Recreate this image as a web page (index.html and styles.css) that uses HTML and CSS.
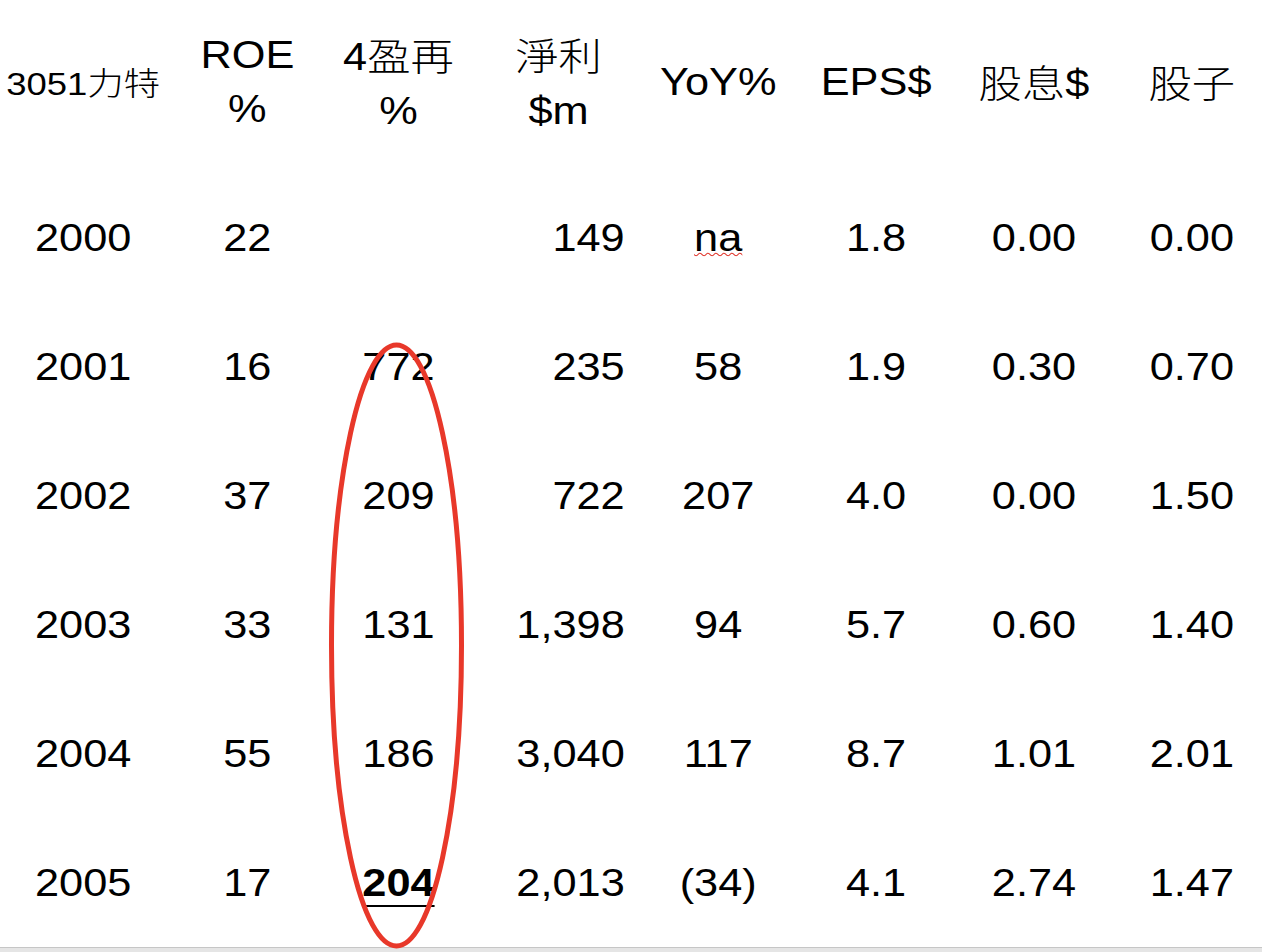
FILE: index.html
```html
<!DOCTYPE html>
<html lang="zh-Hant">
<head>
<meta charset="utf-8">
<title>3051 力特</title>
<link rel="stylesheet" href="styles.css">
</head>
<body>
<main class="sheet">
  <table class="grid">
    <colgroup>
      <col class="c1"><col class="c2"><col class="c3"><col class="c4">
      <col class="c5"><col class="c6"><col class="c7"><col class="c8">
    </colgroup>
    <thead>
      <tr>
        <th class="title">3051<span class="cjk">力特</span></th>
        <th>ROE<br>%</th>
        <th>4<span class="cjk">盈再</span><br>%</th>
        <th><span class="cjk">淨利</span><br>$m</th>
        <th>YoY%</th>
        <th>EPS$</th>
        <th><span class="cjk">股息</span>$</th>
        <th><span class="cjk">股子</span></th>
      </tr>
    </thead>
    <tbody>
      <tr><td>2000</td><td>22</td><td></td><td class="num">149</td><td><span class="typo">na</span></td><td>1.8</td><td>0.00</td><td>0.00</td></tr>
      <tr><td>2001</td><td>16</td><td>772</td><td class="num">235</td><td>58</td><td>1.9</td><td>0.30</td><td>0.70</td></tr>
      <tr><td>2002</td><td>37</td><td>209</td><td class="num">722</td><td>207</td><td>4.0</td><td>0.00</td><td>1.50</td></tr>
      <tr><td>2003</td><td>33</td><td>131</td><td class="num">1,398</td><td>94</td><td>5.7</td><td>0.60</td><td>1.40</td></tr>
      <tr><td>2004</td><td>55</td><td>186</td><td class="num">3,040</td><td>117</td><td>8.7</td><td>1.01</td><td>2.01</td></tr>
      <tr><td>2005</td><td>17</td><td><span class="mark">204</span></td><td class="num">2,013</td><td>(34)</td><td>4.1</td><td>2.74</td><td>1.47</td></tr>
    </tbody>
  </table>
  <div class="statusbar"></div>
</main>
<svg class="ring" width="1262" height="952" viewBox="0 0 1262 952" aria-hidden="true">
  <ellipse cx="396.5" cy="645.5" rx="65" ry="300.5" fill="none" stroke="#e8382a" stroke-width="5"/>
</svg>
</body>
</html>
```
FILE: styles.css
```css
html, body {
  margin: 0;
  padding: 0;
  width: 1262px;
  height: 952px;
  overflow: hidden;
  background: #ffffff;
}

body {
  position: relative;
  font-family: "Liberation Sans", "Noto Sans CJK TC", sans-serif;
  color: #000000;
}

.sheet {
  display: flex;
  flex-direction: column;
  width: 1262px;
  height: 952px;
  overflow: hidden;
}

.grid {
  flex: none;
  width: 1123px;
  border-collapse: collapse;
  table-layout: fixed;
  transform: scaleX(1.14);
  transform-origin: 0 0;
}

.c1 { width: 146px; }
.c2 { width: 142px; }
.c3 { width: 123px; }
.c4 { width: 158px; }
.c5 { width: 122px; }
.c6 { width: 155px; }
.c7 { width: 122px; }
.c8 { width: 155px; }

th, td {
  padding: 0;
  font-size: 38px;
  font-weight: 400;
  text-align: center;
  vertical-align: middle;
  white-space: nowrap;
}

thead tr { height: 172px; }

thead th {
  padding-bottom: 8px;
  line-height: 54px;
}

thead th.title {
  font-size: 32px;
}

tbody tr { height: 129px; }

tbody td {
  line-height: 44px;
  padding-top: 2px;
}

td.num {
  text-align: right;
  padding-right: 21px;
}

.cjk {
  font-family: "Noto Sans CJK TC", sans-serif;
  font-weight: 300;
}

.mark {
  font-weight: 700;
  text-decoration: underline;
  text-decoration-thickness: 2px;
  text-underline-offset: 9px;
}

.typo {
  text-decoration: underline wavy #e0342a;
  text-decoration-thickness: 1px;
  text-underline-offset: 1px;
}

.statusbar {
  flex: 1;
  margin-top: 1px;
  border-top: 1px solid #c6c6c6;
  background: #e5e5e5;
}

.ring {
  position: absolute;
  left: 0;
  top: 0;
  pointer-events: none;
}
```
